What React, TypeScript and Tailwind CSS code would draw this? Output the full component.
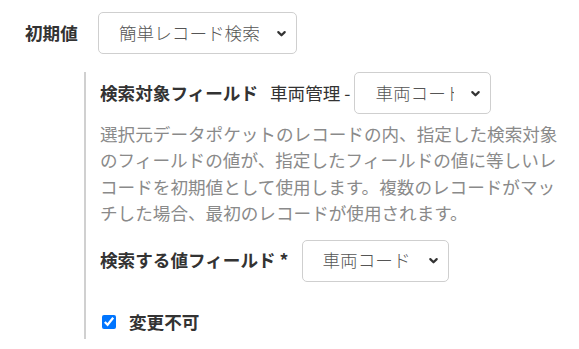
import React from "react";

function Chevron() {
  return (
    <svg className="w-[11px] h-[11px] text-[#333]" viewBox="0 0 12 12" fill="none" stroke="currentColor" strokeWidth={2.4} strokeLinecap="round" strokeLinejoin="round">
      <path d="M2.5 4.5L6 8l3.5-3.5" />
    </svg>
  );
}

interface SelectBoxProps {
  label: string;
  className?: string;
  textWidth?: string;
}

function SelectBox({ label, className = "", textWidth = "" }: SelectBoxProps) {
  return (
    <div className={`flex items-center h-[42px] border border-[#cfcfcf] rounded-[5px] bg-white pl-[20px] pr-[9px] ${className}`}>
      <span className={`text-[#555] font-light whitespace-nowrap overflow-hidden ${textWidth}`}>{label}</span>
      <span className="ml-auto">
        <Chevron />
      </span>
    </div>
  );
}

export default function App() {
  return (
    <div
      className="w-[579px] h-[349px] bg-white text-[17.6px] leading-[26.4px] text-[#333] pt-[12px] pl-[25px] overflow-hidden"
      style={{ fontFamily: '"Noto Sans CJK JP", "Noto Sans", sans-serif' }}
    >
      <div className="flex items-center">
        <span className="w-[73px] font-bold">初期値</span>
        <SelectBox label="簡単レコード検索" className="w-[199px]" />
      </div>

      <div className="ml-[59px] mt-[18px] border-l-[2px] border-[#d0d0d0] pl-[14px] pb-[4px]">
        <div className="flex items-center">
          <span className="font-bold">検索対象フィールド</span>
          <span className="ml-[12px]">車両管理 -</span>
          <SelectBox label="車両コード" className="w-[137px] ml-[4px] pr-[5px]" textWidth="w-[79px]" />
        </div>

        <p className="mt-[7px] text-[#8a8a8a] w-[462px]">
          選択元データポケットのレコードの内、指定した検索対象のフィールドの値が、指定したフィールドの値に等しいレコードを初期値として使用します。複数のレコードがマッチした場合、最初のレコードが使用されます。
        </p>

        <div className="flex items-center mt-[13px]">
          <span className="font-bold">検索する値フィールド *</span>
          <SelectBox label="車両コード" className="w-[147px] ml-[13px]" />
        </div>

        <label className="flex items-center mt-[27px]">
          <input type="checkbox" defaultChecked className="w-[14px] h-[14px] ml-[2px] accent-[#0075ff]" />
          <span className="ml-[13px] font-bold">変更不可</span>
        </label>
      </div>
    </div>
  );
}
